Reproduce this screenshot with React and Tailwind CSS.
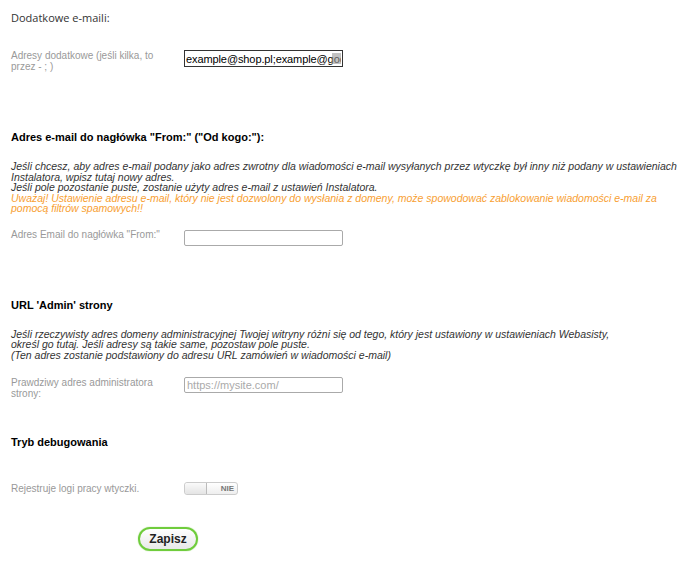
import React from 'react';

const Row = ({ label, children, className = '' }) => (
    <div className={`flex items-start ${className}`}>
        <div className="w-[158px] mr-[15px] text-[10px] leading-[11px] text-[#999]">{label}</div>
        {children}
    </div>
);

const Heading = ({ children, className = '' }) => (
    <h2 className={`text-[11px] leading-[14px] font-bold text-black ${className}`}>{children}</h2>
);

const App = () => {
    return (
        <div className="w-[700px] h-[574px] bg-white pl-[11px] pt-[11px]"
             style={{ fontFamily: '"Liberation Sans", Arial, sans-serif' }}>
            {/* Additional emails */}
            <p className="text-[11px] leading-[14px] text-[#333]"
               style={{ fontFamily: '"Open Sans", sans-serif' }}>Dodatkowe e-maili:</p>

            <Row label="Adresy dodatkowe (jeśli kilka, to przez - ; )" className="mt-[25px]">
                <div className="relative">
                    <input type="text" readOnly defaultValue="example@shop.pl;example@google.com"
                           className="block w-[159px] h-[17px] border border-[#333] px-[1px] text-[11px] tracking-[-0.1px] text-black outline-none" />
                    <span className="absolute right-[2px] top-[3px] w-[9px] h-[11px] bg-[#999] opacity-60" />
                </div>
            </Row>

            {/* From header */}
            <Heading className="mt-[58px]">Adres e-mail do nagłówka "From:" ("Od kogo:"):</Heading>
            <div className="mt-[17px] italic text-[10.5px] leading-[10.5px] text-[#333] w-[680px]">
                <p>Jeśli chcesz, aby adres e-mail podany jako adres zwrotny dla wiadomości e-mail wysyłanych przez wtyczkę był inny niż podany w ustawieniach Instalatora, wpisz tutaj nowy adres.</p>
                <p>Jeśli pole pozostanie puste, zostanie użyty adres e-mail z ustawień Instalatora.</p>
                <p className="text-[#f8a032]">Uważaj! Ustawienie adresu e-mail, który nie jest dozwolony do wysłania z domeny, może spowodować zablokowanie wiadomości e-mail za pomocą filtrów spamowych!!</p>
            </div>

            <Row label={'Adres Email do nagłówka "From:"'} className="mt-[15px]">
                <input type="text" className="mt-[1px] w-[159px] h-[16px] border border-[#aaa] rounded-[2px] text-[11px] px-[2px] outline-none" />
            </Row>

            {/* Admin URL */}
            <Heading className="mt-[52px]">URL 'Admin' strony</Heading>
            <div className="mt-[17px] italic text-[10.5px] leading-[10.5px] text-[#333]">
                <p>Jeśli rzeczywisty adres domeny administracyjnej Twojej witryny różni się od tego, który jest ustawiony w ustawieniach Webasisty,<br />określ go tutaj. Jeśli adresy są takie same, pozostaw pole puste.</p>
                <p>(Ten adres zostanie podstawiony do adresu URL zamówień w wiadomości e-mail)</p>
            </div>

            <Row label="Prawdziwy adres administratora strony:" className="mt-[17px]">
                <input type="text" placeholder="https://mysite.com/"
                       className="w-[159px] h-[16px] border border-[#aaa] rounded-[2px] text-[11px] px-[2px] outline-none placeholder:text-[#aaa]" />
            </Row>

            {/* Debug */}
            <Heading className="mt-[36px]">Tryb debugowania</Heading>

            <Row label="Rejestruje logi pracy wtyczki." className="mt-[34px]">
                <div className="relative mt-[-1px] w-[54px] h-[13px] border border-[#ccc] rounded-[3px] bg-gradient-to-b from-white to-[#eee] flex items-center justify-end pr-[3px]">
                    <span className="absolute left-0 top-0 h-full w-[22px] border-r border-[#bbb] rounded-l-[3px] bg-gradient-to-b from-[#fafafa] to-[#e4e4e4]" />
                    <span className="text-[8px] font-bold text-[#777] leading-none">NIE</span>
                </div>
            </Row>

            <button className="mt-[32px] ml-[127px] w-[60px] h-[24px] rounded-full border-2 border-[#6fcc3c] bg-gradient-to-b from-white to-[#e8e8e8] text-[12px] font-bold text-[#222] shadow-[0_0_1px_#6fcc3c]">
                Zapisz
            </button>
        </div>
    );
};

export default App;
